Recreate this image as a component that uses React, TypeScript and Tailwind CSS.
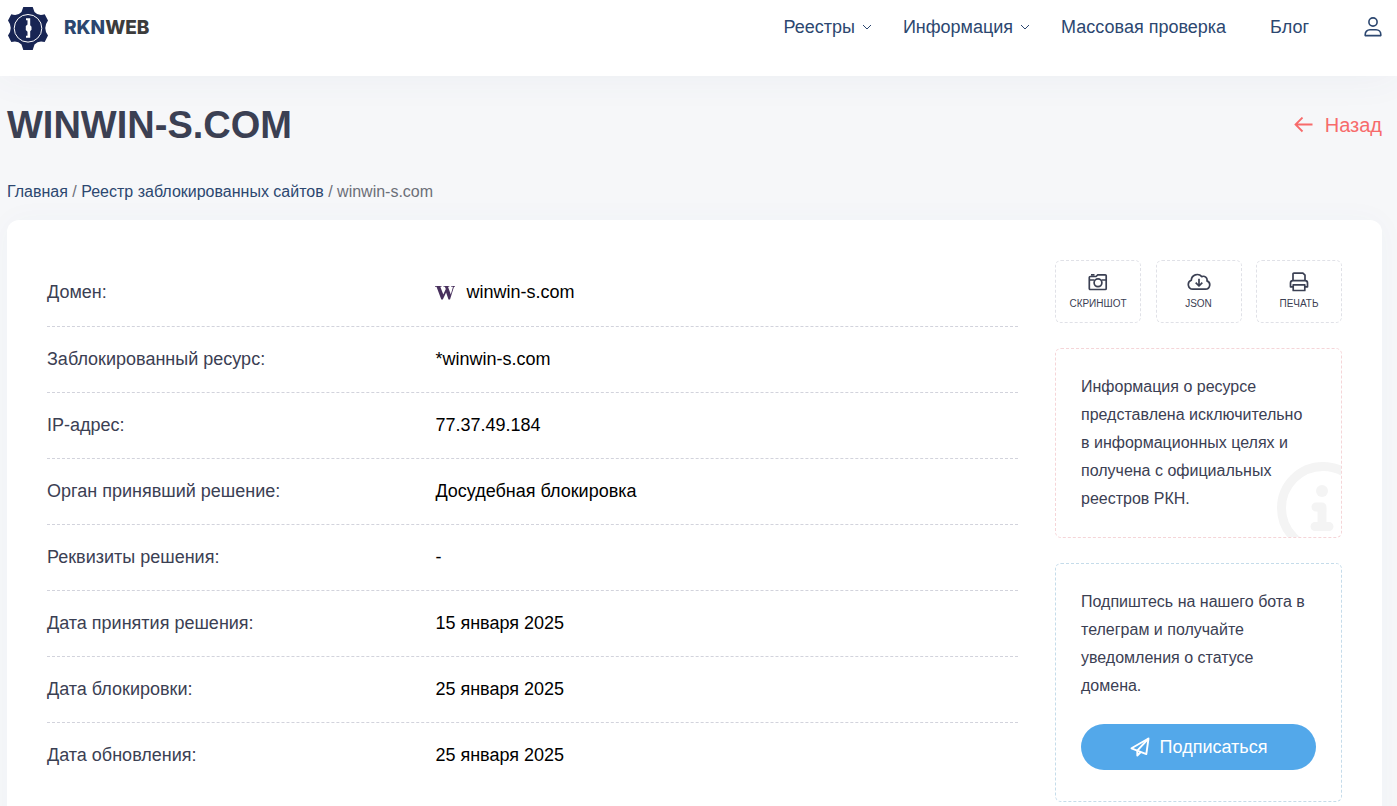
import type { ReactNode } from "react";

const rows: { label: string; value: string; favicon?: boolean }[] = [
  { label: "Домен:", value: "winwin-s.com", favicon: true },
  { label: "Заблокированный ресурс:", value: "*winwin-s.com" },
  { label: "IP-адрес:", value: "77.37.49.184" },
  { label: "Орган принявший решение:", value: "Досудебная блокировка" },
  { label: "Реквизиты решения:", value: "-" },
  { label: "Дата принятия решения:", value: "15 января 2025" },
  { label: "Дата блокировки:", value: "25 января 2025" },
  { label: "Дата обновления:", value: "25 января 2025" }
];

function Logo() {
  return (
    <svg width="42" height="44" viewBox="0 0 42 44" aria-hidden="true">
      <path
        d="M16.300 1h9.400l1.800 5Q31.500 10.500 37.700 8.300L41 14.500Q35.500 22 41 29.500L37.700 36Q31.500 34 27.500 38.500L25.700 44h-9.400l-1.800-5.500Q10.500 34 4.300 36L1 29.500Q6.500 22 1 14.500L4.300 8.300Q10.500 10.500 14.500 6z"
        fill="#182554"
      />
      <circle cx="21" cy="22.300" r="13.800" fill="#182554" stroke="#fff" strokeWidth="1" />
      <path d="M19 12.300h4.200v7l1.300 1.500v3l-1.300 1.500v6.500H19v-2h1.500v-4L18.800 24v-4l1.700-1.500v-4.200H19z" fill="#fff" />
    </svg>
  );
}

function Chevron() {
  return (
    <svg width="10" height="6" viewBox="0 0 10 6" fill="none" stroke="currentColor" aria-hidden="true">
      <path d="M1 1l4 4 4-4" />
    </svg>
  );
}

function UserIcon() {
  return (
    <svg width="18" height="20" viewBox="0 0 18 20" fill="none" stroke="currentColor" strokeWidth="1.600" aria-hidden="true">
      <circle cx="9" cy="5" r="4.100" />
      <path d="M1.200 18.600v-1.100c0-2.700 2-4.700 4.700-4.700h6.200c2.700 0 4.700 2 4.700 4.700v1.100z" strokeLinejoin="round" />
    </svg>
  );
}

function CameraIcon() {
  return (
    <svg width="20" height="20" viewBox="0 0 20 20" fill="none" stroke="currentColor" strokeWidth="1.700" aria-hidden="true">
      <path d="M8 4.500l1.800-1.700h7.400c.6 0 1 .4 1 1v12.700c0 .6-.4 1-1 1H2.300c-.6 0-1-.4-1-1V5.500c0-.6.400-1 1-1z" />
      <path d="M3 2.900h3.500M1.500 8h5M13.500 8h4.700" />
      <circle cx="10" cy="10.800" r="3.900" />
    </svg>
  );
}

function CloudIcon() {
  return (
    <svg width="24" height="20" viewBox="0 0 24 20" fill="none" stroke="currentColor" strokeWidth="1.700" strokeLinejoin="round" aria-hidden="true">
      <path d="M5.800 17.200a4.600 4.600 0 0 1-1.500-8.900A6 6 0 0 1 14.800 4.600 3.800 3.800 0 0 1 20 8.900a4.300 4.300 0 0 1-1.500 8.300z" />
      <path d="M12 6.800v7M8.700 10.700L12 14l3.300-3.300" />
    </svg>
  );
}

function PrintIcon() {
  return (
    <svg width="20" height="20" viewBox="0 0 20 20" fill="none" stroke="currentColor" strokeWidth="1.700" strokeLinejoin="round" aria-hidden="true">
      <path d="M4 8.500V2c0-.5.400-.9.900-.9h9L16 3.200v5.300" />
      <path d="M4.200 14.800H1.500V11c0-1.400 1-2.400 2.400-2.400h12.200c1.400 0 2.400 1 2.400 2.400v3.800h-2.700" />
      <path d="M4.200 12.800h11.600v5.700H4.200z" />
    </svg>
  );
}

function PlaneIcon() {
  return (
    <svg width="20" height="20" viewBox="0 0 20 20" fill="none" stroke="currentColor" strokeWidth="1.900" strokeLinejoin="round" aria-hidden="true">
      <path d="M18.500 1.500L1.500 11.300l5.800 2.300 9 3.500z" />
      <path d="M18.500 1.500L7.300 13.600v5l3.500-3.600" />
    </svg>
  );
}

function Favicon() {
  return (
    <svg width="20" height="16" viewBox="0 0 20 16" fill="#48305d" aria-hidden="true">
      <path d="M0 2h6.500v.8H5.300l3 7.700L10.800 5l-.9-2.200H8.500V2h5.800v.8H13l2.800 7.700 2.200-7.700h-1.800V2H20v.8h-1l-4 12.700h-1.500l-2.400-7-3.300 7H6.300L1.500 2.800H0z" />
    </svg>
  );
}

function NavLink({ children, dropdown }: { children: ReactNode; dropdown?: boolean }) {
  return (
    <a href="#" className="flex items-center gap-[7px]">
      {children}
      {dropdown ? <Chevron /> : null}
    </a>
  );
}

function ActionButton({ icon, label }: { icon: ReactNode; label: string }) {
  return (
    <button
      type="button"
      className="flex h-[63px] w-[86px] flex-col items-center rounded-md border border-dashed border-[#e0e1e7] pt-[11px] text-[10px] leading-3 uppercase"
    >
      {icon}
      <span className="mt-1.5">{label}</span>
    </button>
  );
}

export default function App() {
  return (
    <div className="min-h-screen bg-[#f6f7f9] font-['Liberation_Sans',Arial,sans-serif] text-[#3b4053]">
      <header className="flex h-[76px] items-start justify-between bg-white pr-[15px] pl-[7px] text-[#2c4770] shadow-[0_0_40px_rgba(70,80,130,0.06)]">
        <a href="#" className="flex items-center gap-[15px] pt-1.5 font-['Inter',sans-serif] text-[19px] font-extrabold">
          <Logo />
          <span>
            RKN<span className="text-[#3c3c3c]">WEB</span>
          </span>
        </a>
        <nav className="flex items-center pt-4 text-lg leading-[22px]">
          <div className="flex gap-[31px]">
            <NavLink dropdown>Реестры</NavLink>
            <NavLink dropdown>Информация</NavLink>
            <NavLink>Массовая проверка</NavLink>
          </div>
          <div className="ml-11 flex gap-[55px]">
            <NavLink>Блог</NavLink>
            <a href="#" aria-label="Личный кабинет" className="flex items-center">
              <UserIcon />
            </a>
          </div>
        </nav>
      </header>

      <main className="pr-[15px] pl-[7px]">
        <div className="flex items-center justify-between pt-6">
          <h1 className="text-[38px] leading-[50px] font-bold">WINWIN-S.COM</h1>
          <a href="#" className="flex items-center gap-3 text-xl text-[#f76b6b]">
            <svg width="19" height="16" viewBox="0 0 19 16" fill="none" stroke="currentColor" strokeWidth="1.800" aria-hidden="true">
              <path d="M8.500 0.500L1.500 7.500l7 7M1.500 7.500h17" />
            </svg>
            Назад
          </a>
        </div>

        <nav className="pt-[30px] pb-4 text-base leading-6 text-[#6c6f78]">
          <a href="#" className="text-[#2c4770]">Главная</a> /{" "}
          <a href="#" className="text-[#2c4770]">Реестр заблокированных сайтов</a> / <span>winwin-s.com</span>
        </nav>

        <section className="flex items-start gap-[37px] rounded-t-xl bg-white p-10 shadow-[0_0_30px_rgba(70,80,150,0.03)]">
          <table className="flex-1 text-left text-lg">
            <tbody className="block w-full">
              {rows.map((row) => (
                <tr
                  key={row.label}
                  className="flex h-[66px] items-center border-b border-dashed border-[#d2d3dc] pb-0.5 first:h-[67px] last:border-b-0"
                >
                  <th scope="row" className="w-2/5 font-normal">{row.label}</th>
                  <td className="flex items-center gap-[11px] text-black">
                    {row.favicon ? <Favicon /> : null}
                    {row.value}
                  </td>
                </tr>
              ))}
            </tbody>
          </table>

          <aside className="w-[287px] shrink-0">
            <div className="flex justify-between">
              <ActionButton icon={<CameraIcon />} label="Скриншот" />
              <ActionButton icon={<CloudIcon />} label="JSON" />
              <ActionButton icon={<PrintIcon />} label="Печать" />
            </div>

            <div className="relative mt-[25px] overflow-hidden rounded-md border border-dashed border-[#f5d5d8] px-[25px] py-6">
              <svg className="absolute -right-7 -bottom-[17px] text-[#f4f4f4]" width="92" height="92" viewBox="0 0 92 92" aria-hidden="true">
                <circle cx="46" cy="46" r="41.500" fill="none" stroke="currentColor" strokeWidth="9" />
                <circle cx="45" cy="29" r="6" fill="currentColor" />
                <path d="M39 45h6v19M38 64.500h14" fill="none" stroke="currentColor" strokeWidth="9" strokeLinecap="round" strokeLinejoin="round" />
              </svg>
              <p className="relative pr-1.5 text-base leading-7">
                Информация о ресурсе представлена исключительно в информационных целях и получена с официальных реестров РКН.
              </p>
            </div>

            <div className="mt-[25px] rounded-md border border-dashed border-[#c5dcea] px-[25px] pt-6 pb-[31px]">
              <p className="pr-1.5 text-base leading-7">
                Подпиштесь на нашего бота в телеграм и получайте уведомления о статусе домена.
              </p>
              <button
                type="button"
                className="mt-6 flex h-[46px] w-full items-center justify-center gap-2.5 rounded-full bg-[#53a8ea] text-lg text-white"
              >
                <PlaneIcon />
                Подписаться
              </button>
            </div>
          </aside>
        </section>
      </main>
    </div>
  );
}
